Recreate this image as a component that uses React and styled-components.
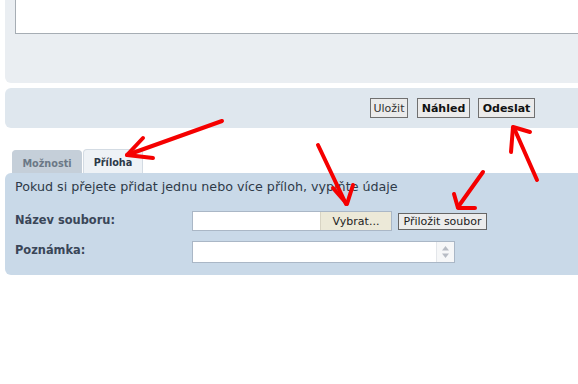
import styled, { createGlobalStyle } from "styled-components";

const GlobalStyle = createGlobalStyle`
body{
  margin:0;
  background:#fff;
  overflow:hidden;
  font-family:"DejaVu Sans", Verdana, sans-serif;
}
`

const arrows = [
  { line: "222,121 127,155", head: "143,138 127,155 153,158" },
  { line: "318,145 346,204", head: "333,188 347,204 353,185" },
  { line: "483,172 458,207", head: "454,194 458,208 475,208" },
  { line: "537,180 514,128", head: "530,132 513,127 511,152" },
];

const App = () => {
  return (
    <Page>
      <GlobalStyle />
      <TopPanel>
        <Editor />
      </TopPanel>
      <ButtonBar>
        <Btn>Uložit</Btn>
        <Btn $bold $w={53}>Náhled</Btn>
        <Btn $bold $w={57}>Odeslat</Btn>
      </ButtonBar>
      <Tabs>
        <Tab $w={70}>Možnosti</Tab>
        <Tab $active $w={60}>Příloha</Tab>
      </Tabs>
      <AttachPanel>
        <Intro>Pokud si přejete přidat jednu nebo více příloh, vyplňte údaje</Intro>
        <FormGrid>
          <Label>Název souboru:</Label>
          <FileRow>
            <FileControl>
              <FileName />
              <Browse>Vybrat...</Browse>
            </FileControl>
            <AttachBtn>Přiložit soubor</AttachBtn>
          </FileRow>
          <Label>Poznámka:</Label>
          <NoteBox>
            <NoteText />
            <ScrollStrip>
              <svg width="9" height="16" viewBox="0 0 9 16">
                <path d="M4.5 2 L8 6.5 L1 6.5 Z" fill="#b7bcc4" />
                <path d="M4.5 14 L8 9.5 L1 9.5 Z" fill="#b7bcc4" />
              </svg>
            </ScrollStrip>
          </NoteBox>
        </FormGrid>
      </AttachPanel>
      <Marks width="578" height="384" viewBox="0 0 578 384">
        {arrows.map((a, i) => (
          <g key={i}>
            <polyline points={a.line} />
            <polyline points={a.head} />
          </g>
        ))}
      </Marks>
    </Page>
  )
}

const Page = styled.div`
position:relative;
width:578px;
height:384px;
overflow:hidden;
`

const TopPanel = styled.div`
margin:-30px 0 0 5px;
width:620px;
padding:10px 10px 49px;
box-sizing:border-box;
background:#eaeef2;
border-radius:0 0 6px 6px;
`

const Editor = styled.div`
height:54px;
border:1px solid #a6adb4;
background:#fff;
box-sizing:border-box;
`

const ButtonBar = styled.div`
margin:5px 0 0 5px;
width:620px;
height:40px;
box-sizing:border-box;
padding-right:90px;
display:flex;
align-items:center;
justify-content:flex-end;
gap:8px;
background:#dfe7ee;
border-radius:6px;
`

const Btn = styled.button`
width:${p => p.$w || 38}px;
height:20px;
padding:0;
margin:0;
font-family:"DejaVu Sans", Verdana, sans-serif;
font-size:11px;
font-weight:${p => p.$bold ? "bold" : "normal"};
color:${p => p.$bold ? "#111" : "#333"};
background:#ebebeb;
border:1px solid #707070;
&:first-child{margin-right:1px;}
`

const Tabs = styled.div`
margin:21px 0 0 12px;
height:24px;
display:flex;
align-items:flex-end;
gap:1px;
`

const Tab = styled.div`
width:${p => p.$w}px;
height:${p => p.$active ? 24 : 23}px;
box-sizing:border-box;
display:flex;
align-items:center;
justify-content:center;
padding-top:2px;
font-size:9.7px;
font-weight:bold;
color:${p => p.$active ? "#2c3848" : "#6b7886"};
background:${p => p.$active ? "#eef2f6" : "#c5cfd9"};
border:1px solid ${p => p.$active ? "#d3dbe3" : "#c5cfd9"};
border-bottom:none;
border-radius:4px 4px 0 0;
`

const AttachPanel = styled.div`
margin-left:5px;
width:620px;
box-sizing:border-box;
padding:6px 10px 12px;
background:#c9d9e8;
border-radius:6px;
`

const Intro = styled.div`
font-size:12.7px;
line-height:16px;
color:#2e3a48;
`

const FormGrid = styled.div`
margin-top:16px;
display:grid;
grid-template-columns:177px auto;
row-gap:10px;
align-items:start;
`

const Label = styled.div`
font-size:11.4px;
font-weight:bold;
line-height:14px;
padding-top:2px;
color:#3a4658;
`

const FileRow = styled.div`
display:flex;
align-items:center;
gap:6px;
height:20px;
`

const FileControl = styled.div`
display:flex;
height:20px;
box-sizing:border-box;
border:1px solid #aab7c6;
`

const FileName = styled.div`
width:127px;
background:#fff;
`

const Browse = styled.div`
width:70px;
display:flex;
align-items:center;
justify-content:center;
font-size:11px;
color:#222;
background:#ece9d8;
border-left:1px solid #d8d4c4;
`

const AttachBtn = styled.div`
width:89px;
height:17px;
box-sizing:border-box;
display:flex;
align-items:center;
justify-content:center;
font-size:11px;
color:#222;
background:#ececec;
border:1px solid #666;
`

const NoteBox = styled.div`
width:263px;
height:22px;
box-sizing:border-box;
display:flex;
border:1px solid #aab7c6;
background:#fff;
`

const NoteText = styled.div`
flex:1;
`

const ScrollStrip = styled.div`
width:17px;
display:flex;
align-items:center;
justify-content:center;
background:#f6f7f8;
border-left:1px solid #e3e6ea;
`

const Marks = styled.svg`
position:absolute;
left:0;
top:0;
pointer-events:none;
fill:none;
stroke:#f50000;
stroke-width:4;
stroke-linecap:round;
stroke-linejoin:round;
`

export default App
